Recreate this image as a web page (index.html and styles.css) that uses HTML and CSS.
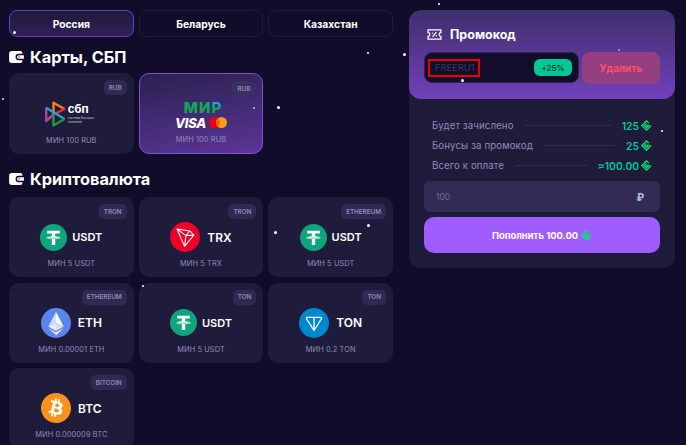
FILE: index.html
```html
<!DOCTYPE html>
<html lang="ru">
<head>
<meta charset="utf-8">
<title>Пополнение</title>
<link rel="stylesheet" href="styles.css">
</head>
<body>
<svg class="sprite" aria-hidden="true">
  <symbol id="wallet" viewBox="0 0 16 13"><path fill="#fff" fill-rule="evenodd" d="M3 0h9a2.500 2.500 0 0 1 2.500 2.500V3H10.500a3.500 3.500 0 0 0 0 7h4v.500A2.500 2.500 0 0 1 12 13H3a3 3 0 0 1-3-3V3a3 3 0 0 1 3-3zM10.500 4.500H16v4h-5.500a2 2 0 0 1 0-4zm.3 1.300a.7.7 0 1 0 0 1.400.7.7 0 0 0 0-1.400z"/></symbol>
  <symbol id="coin" viewBox="0 0 12 12"><path fill="none" stroke="#00e676" stroke-width="1.400" d="M8.700 3.400 6 .9.900 6 6 11.100 11.100 6M6 3.700 3.700 6 6 8.300 8.300 6H6"/></symbol>
  <symbol id="tether" viewBox="0 0 32 32"><circle cx="16" cy="16" r="16" fill="#0fa47c"/><path fill="#fff" d="M8.500 8h15v3.300H18v3.200c3.700.2 6.500.8 6.500 1.700s-2.800 1.500-6.500 1.700V25h-4v-7.100c-3.700-.2-6.500-.8-6.500-1.700s2.800-1.500 6.500-1.700v-3.200H8.500z"/><path fill="none" stroke="#0fa47c" stroke-width=".8" d="M8 16c2 1 14 1 16 0"/></symbol>
  <symbol id="trx" viewBox="0 0 32 32"><circle cx="16" cy="16" r="16" fill="#ef0027"/><path fill="none" stroke="#fff" stroke-width="1.100" stroke-linejoin="round" d="M7.500 7.500 21 9.500l4.500 4.500-10 12zM7.500 7.500l8 18.500 1.500-11.500zM17 14.500l8.500-.5M17 14.500 21 9.500"/></symbol>
  <symbol id="eth" viewBox="0 0 32 32"><circle cx="16" cy="16" r="16" fill="#5b84ec"/><path fill="#fff" fill-opacity=".7" d="M16 4v12l-8.200 3.700z"/><path fill="#fff" fill-opacity=".95" d="m16 4 8.200 15.700L16 16z"/><path fill="#fff" fill-opacity=".85" d="M7.800 19.700 16 16v8.500z"/><path fill="#d5dffa" d="M24.200 19.700 16 16v8.500z"/><path fill="#fff" fill-opacity=".8" d="m7.800 21.300 8.200 4.800V29z"/><path fill="#fff" d="m24.200 21.300-8.200 4.800V29z"/></symbol>
  <symbol id="ton" viewBox="0 0 32 32"><circle cx="16" cy="16" r="16" fill="#0088cc"/><path fill="none" stroke="#fff" stroke-width="1.400" stroke-linejoin="round" d="M9 10h14c1 0 1.400.9.900 1.700L16 24 8.100 11.700C7.600 10.900 8 10 9 10zM16 10v14"/></symbol>
  <symbol id="btc" viewBox="0 0 24 24"><circle cx="12" cy="12" r="9" fill="#fff"/><path fill="#f7931a" d="M23.638 14.904c-1.602 6.43-8.113 10.34-14.542 8.736C2.670 22.050-1.244 15.525.362 9.105 1.962 2.670 8.475-1.243 14.900.358c6.430 1.605 10.342 8.115 8.738 14.548v-.002zm-6.350-4.613c.24-1.590-.974-2.450-2.640-3.030l.54-2.153-1.315-.33-.525 2.107c-.345-.087-.705-.167-1.064-.25l.526-2.127-1.320-.33-.54 2.165c-.285-.067-.565-.132-.84-.2l-1.815-.45-.35 1.407s.975.225.955.236c.535.136.63.486.615.766l-1.477 5.920c-.075.166-.24.406-.614.314.015.02-.96-.24-.96-.24l-.66 1.510 1.710.426.93.242-.54 2.190 1.320.327.54-2.170c.36.1.705.19 1.050.273l-.51 2.154 1.320.33.545-2.190c2.240.427 3.930.257 4.640-1.774.57-1.637-.03-2.580-1.217-3.196.854-.193 1.500-.76 1.680-1.930h.01zm-3.010 4.220c-.404 1.640-3.157.75-4.050.53l.72-2.900c.896.23 3.757.67 3.330 2.370zm.41-4.240c-.37 1.490-2.662.735-3.405.55l.654-2.640c.744.18 3.137.524 2.750 2.084v.006z"/></symbol>
</svg>

<div class="page">
  <main class="left">
    <nav class="tabs">
      <div class="tab tab-active">Россия</div>
      <div class="tab">Беларусь</div>
      <div class="tab">Казахстан</div>
    </nav>

    <h2 class="heading heading-first"><svg class="wallet"><use href="#wallet"/></svg>Карты, СБП</h2>
    <div class="grid grid-fiat">
      <div class="card">
        <span class="badge">RUB</span>
        <div class="card-main">
          <div class="sbp">
            <svg class="sbp-mark" viewBox="0 0 21 26" fill="none" stroke-width="2.400" stroke-linejoin="round">
              <path stroke="#f58220" d="M8.500 13V1.800L19.500 8"/>
              <path stroke="#e3342f" d="M19.500 8 8.500 13.500"/>
              <path stroke="#a24b9d" d="M1.200 6.800V20L8.500 13.500"/>
              <path stroke="#2a9fd8" d="M1.200 6.800 19.500 18"/>
              <path stroke="#1d9b48" d="M19.500 18 8.500 24.500V14"/>
            </svg>
            <div class="sbp-text">
              <span class="sbp-name">сбп</span>
              <span class="sbp-sub">система быстрых платежей</span>
            </div>
          </div>
        </div>
        <div class="min">МИН 100 RUB</div>
      </div>
      <div class="card card-active">
        <span class="badge">RUB</span>
        <div class="card-main">
          <div class="cards-logo">
            <div class="mir">МИ<span class="mir-r">Р</span></div>
            <div class="visa-row">
              <span class="visa">VISA</span>
              <svg class="mc" viewBox="0 0 18 11"><circle cx="5.500" cy="5.500" r="5.500" fill="#eb001b"/><circle cx="12.500" cy="5.500" r="5.500" fill="#f79e1b"/><path fill="#ff5f00" d="M9 1.300a5.500 5.500 0 0 1 0 8.400 5.500 5.500 0 0 1 0-8.400z"/></svg>
            </div>
          </div>
        </div>
        <div class="min">МИН 100 RUB</div>
      </div>
    </div>

    <h2 class="heading heading-second"><svg class="wallet"><use href="#wallet"/></svg>Криптовалюта</h2>
    <div class="grid">
      <div class="card"><span class="badge">TRON</span><div class="card-main"><svg class="coin-sm"><use href="#tether"/></svg><span class="coin-name">USDT</span></div><div class="min">МИН 5 USDT</div></div>
      <div class="card"><span class="badge">TRON</span><div class="card-main"><svg class="coin-lg"><use href="#trx"/></svg><span class="coin-name coin-name-lg">TRX</span></div><div class="min">МИН 5 TRX</div></div>
      <div class="card"><span class="badge">ETHEREUM</span><div class="card-main"><svg class="coin-sm"><use href="#tether"/></svg><span class="coin-name">USDT</span></div><div class="min">МИН 5 USDT</div></div>
      <div class="card"><span class="badge">ETHEREUM</span><div class="card-main"><svg class="coin-lg"><use href="#eth"/></svg><span class="coin-name coin-name-lg">ETH</span></div><div class="min">МИН 0.00001 ETH</div></div>
      <div class="card"><span class="badge">TON</span><div class="card-main"><svg class="coin-sm"><use href="#tether"/></svg><span class="coin-name">USDT</span></div><div class="min">МИН 5 USDT</div></div>
      <div class="card"><span class="badge">TON</span><div class="card-main"><svg class="coin-lg"><use href="#ton"/></svg><span class="coin-name coin-name-lg">TON</span></div><div class="min">МИН 0.2 TON</div></div>
      <div class="card"><span class="badge">BITCOIN</span><div class="card-main"><svg class="coin-lg"><use href="#btc"/></svg><span class="coin-name coin-name-lg">BTC</span></div><div class="min">МИН 0.000009 BTC</div></div>
    </div>
  </main>

  <aside class="panel">
    <section class="promo">
      <h3 class="promo-title">
        <svg class="ticket" viewBox="0 0 16 12"><path fill="none" stroke="#fff" stroke-width="1.400" d="M1 1h14v3a2 2 0 0 0 0 4v3H1V8a2 2 0 0 0 0-4zM10 3.500 6 8.500"/><circle cx="6" cy="4.500" r=".8" fill="#fff"/><circle cx="10" cy="7.500" r=".8" fill="#fff"/></svg>
        Промокод
      </h3>
      <div class="promo-row">
        <div class="promo-input">
          <span class="promo-code">FREERU1</span>
          <span class="promo-pct">+25%</span>
          <span class="annotation"></span>
        </div>
        <div class="promo-delete">Удалить</div>
      </div>
    </section>
    <section class="summary">
      <div class="rows">
        <div class="row"><span class="row-label">Будет зачислено</span><i class="row-line"></i><span class="row-value">125<svg class="coin"><use href="#coin"/></svg></span></div>
        <div class="row"><span class="row-label">Бонусы за промокод</span><i class="row-line"></i><span class="row-value">25<svg class="coin"><use href="#coin"/></svg></span></div>
        <div class="row"><span class="row-label">Всего к оплате</span><i class="row-line"></i><span class="row-value">≈100.00<svg class="coin"><use href="#coin"/></svg></span></div>
      </div>
      <div class="amount"><span class="amount-value">100</span><span class="amount-cur">₽</span></div>
      <div class="submit">Пополнить 100.00<svg class="coin"><use href="#coin"/></svg></div>
    </section>
  </aside>
</div>

<div class="stars" aria-hidden="true">
  <i class="star s1"></i><i class="star s2"></i><i class="star s3"></i><i class="star s4"></i><i class="star s5"></i>
  <i class="star s6"></i><i class="star s7"></i><i class="star s8"></i><i class="star s9"></i><i class="star s10"></i>
  <i class="star s11"></i><i class="star s12"></i><i class="star s13"></i>
</div>
</body>
</html>
```

FILE: styles.css
```css
* { box-sizing: border-box; }
html, body { margin: 0; height: 100%; }
body {
  height: 445px;
  overflow: hidden;
  background: #100c2a;
  color: #fff;
  font-family: Inter, "Noto Sans", sans-serif;
  position: relative;
}
.sprite { position: absolute; width: 0; height: 0; }

.page {
  display: flex;
  gap: 16px;
  padding: 10px 11px 0 9px;
}
.left { width: 384px; flex: none; }

.tabs { display: grid; grid-template-columns: repeat(3, 1fr); gap: 5px; }
.tab {
  height: 27px;
  display: flex;
  align-items: center;
  justify-content: center;
  border: 1px solid #1f1b3b;
  border-radius: 8px;
  font-size: 10.300px;
  font-weight: 700;
}
.tab-active {
  border-color: #6a3dc0;
  background: linear-gradient(180deg, #1e1a3c, #2f2058);
}

.heading {
  display: flex;
  align-items: center;
  gap: 6px;
  margin: 0;
  font-size: 16.300px;
  line-height: 20px;
  font-weight: 700;
}
.heading-first { margin-top: 10px; margin-bottom: 6px; }
.heading-second { margin-top: 15px; margin-bottom: 8px; }
.wallet { width: 15px; height: 12px; flex: none; }

.grid {
  display: grid;
  grid-template-columns: repeat(3, 1fr);
  gap: 5.5px 5px;
}
.grid-fiat .card { height: 81px; }

.card {
  position: relative;
  height: 80px;
  display: flex;
  flex-direction: column;
  align-items: center;
  background: #1f1b3b;
  border-radius: 10px;
  padding-top: 25px;
}
.card-active {
  background: linear-gradient(170deg, #2b2150, #5b3597);
  border: 1px solid #7b50d2;
}
.badge {
  position: absolute;
  top: 7px;
  right: 7px;
  height: 15px;
  padding: 0 5px;
  display: flex;
  align-items: center;
  background: #2f2a52;
  border-radius: 5px;
  font-size: 6.300px;
  font-weight: 600;
  color: #8f8bb8;
}
.card-active .badge { background: #3a2f63; }
.card-main {
  height: 30px;
  display: flex;
  align-items: center;
  gap: 5px;
}
.min {
  margin-top: auto;
  margin-bottom: 8px;
  font-size: 7.400px;
  line-height: 10px;
  color: #8f8bba;
  letter-spacing: .1px;
}
.coin-sm { width: 27px; height: 27px; flex: none; }
.coin-lg { width: 30px; height: 30px; flex: none; margin-right: 2px; }
.coin-name { font-size: 11px; font-weight: 600; }
.coin-name-lg { font-size: 12px; }

.sbp { display: flex; align-items: center; gap: 2px; margin-top: 2px; }
.sbp-mark { width: 21px; height: 26px; flex: none; }
.sbp-text { display: flex; flex-direction: column; width: 30px; }
.sbp-name { font-size: 11.500px; line-height: 11px; font-weight: 700; }
.sbp-sub { font-size: 3px; line-height: 4px; margin-top: 1px; color: #c9c9d6; }

.cards-logo { display: flex; flex-direction: column; align-items: center; margin-top: 1px; }
.mir {
  font-size: 15px;
  line-height: 13px;
  font-weight: 800;
  color: #0fa958;
  letter-spacing: 1px;
  margin-left: 4px;
}
.mir-r {
  background: linear-gradient(200deg, #12a7e0 35%, #0fa958 50%);
  -webkit-background-clip: text;
  background-clip: text;
  color: transparent;
}
.visa-row { display: flex; align-items: center; gap: 3px; margin-top: 3px; }
.visa { font-size: 13px; line-height: 12px; font-weight: 800; font-style: italic; letter-spacing: -.3px; }
.mc { width: 18px; height: 11px; flex: none; }

.panel {
  width: 266px;
  height: 258px;
  flex: none;
  background: #1f1b3b;
  border-radius: 12px;
  overflow: hidden;
}
.promo {
  height: 89px;
  padding: 16px 15px 0;
  border-radius: 12px;
  background: linear-gradient(180deg, #3f2f6d, #7240bb);
}
.promo-title {
  display: flex;
  align-items: center;
  gap: 8px;
  margin: 0 0 10px;
  height: 16px;
  font-size: 12.500px;
  font-weight: 700;
  padding-left: 3px;
}
.ticket { width: 15px; height: 11px; flex: none; }
.promo-row { display: flex; gap: 3px; }
.promo-input {
  position: relative;
  width: 155px;
  height: 31px;
  display: flex;
  align-items: center;
  justify-content: space-between;
  padding: 0 6px 0 10px;
  background: #110d2a;
  border: 1px solid #2c2650;
  border-radius: 8px;
}
.promo-code { font-size: 9.400px; color: #3b3858; }
.promo-pct {
  width: 38px;
  height: 17px;
  display: flex;
  align-items: center;
  justify-content: center;
  background: #00c896;
  border-radius: 6px;
  color: #13352f;
  font-size: 8px;
  font-weight: 600;
}
.annotation {
  position: absolute;
  left: 3px;
  top: 6px;
  width: 52px;
  height: 18px;
  border: 2px solid #e80000;
}
.promo-delete {
  flex: 1;
  height: 32px;
  display: flex;
  align-items: center;
  justify-content: center;
  background: #933f80;
  border-radius: 8px;
  color: #ff5068;
  font-size: 10px;
  font-weight: 700;
}

.summary { padding: 0 15px; }
.rows { padding: 19px 8px 0 8px; display: flex; flex-direction: column; gap: 5px; }
.row { display: flex; align-items: center; height: 15px; }
.row-label { font-size: 9.700px; color: #8f8bb8; letter-spacing: .1px; }
.row-line { flex: 1; height: 1px; margin: 0 11px; background: #322c54; }
.row-value {
  display: flex;
  align-items: center;
  gap: 2px;
  font-size: 10.300px;
  font-weight: 600;
  color: #00c896;
}
.coin { width: 11px; height: 11px; flex: none; }
.amount {
  margin-top: 8px;
  height: 31px;
  display: flex;
  align-items: center;
  justify-content: space-between;
  padding: 0 16px 0 12px;
  background: #322c54;
  border-radius: 6px;
  font-size: 8.500px;
}
.amount-value { color: #6e6a94; }
.amount-cur { color: #a9bce6; font-size: 10px; font-weight: 800; }
.submit {
  margin-top: 5px;
  height: 36px;
  display: flex;
  align-items: center;
  justify-content: center;
  gap: 3px;
  background: #9f5cff;
  border-radius: 10px;
  font-size: 9.400px;
  font-weight: 700;
}

.stars { position: absolute; inset: 0; pointer-events: none; }
.star { position: absolute; width: 2px; height: 2px; border-radius: 50%; background: #fff; }
.s1 { left: 13px; top: 31px; width: 3px; height: 3px; }
.s2 { left: 367px; top: 52px; }
.s3 { left: 2px; top: 98px; width: 1.500px; height: 1.500px; opacity: .8; }
.s4 { left: 253px; top: 107px; opacity: .7; }
.s5 { left: 277px; top: 106px; width: 3px; height: 3px; }
.s6 { left: 438px; top: 3px; }
.s7 { left: 403px; top: 53px; width: 3px; height: 3px; }
.s8 { left: 618px; top: 49px; opacity: .6; }
.s9 { left: 461px; top: 79px; width: 3px; height: 3px; }
.s10 { left: 661px; top: 130px; }
.s11 { left: 274px; top: 231px; width: 3px; height: 3px; }
.s12 { left: 367px; top: 224px; width: 3px; height: 3px; }
.s13 { left: 142px; top: 285px; }
```
